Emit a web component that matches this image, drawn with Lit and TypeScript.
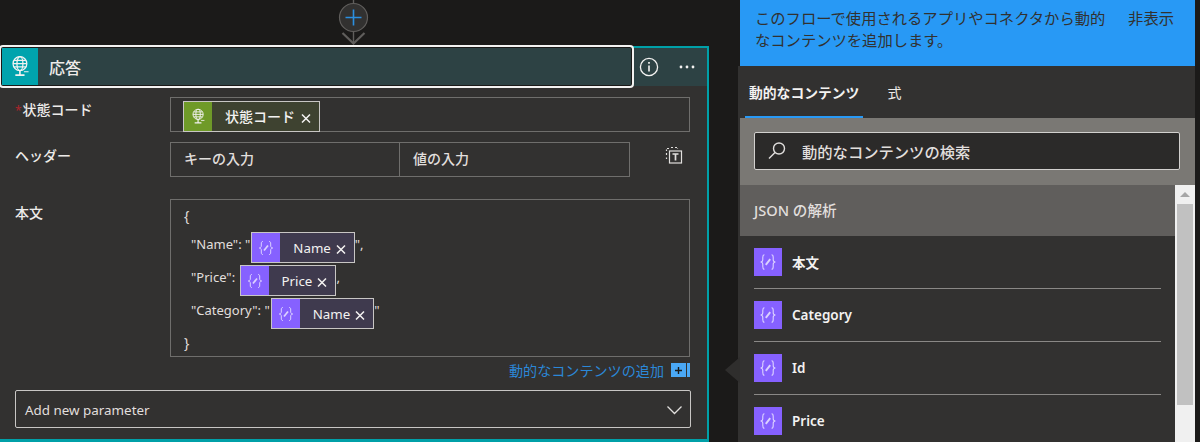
import { LitElement, html, css } from "lit";
import { customElement } from "lit/decorators.js";

const globe = (size: number) => html`<svg width=${size} height=${size} viewBox="0 0 20 20" fill="none" stroke="#f3f2f1" stroke-width="1.1">
  <circle cx="9.5" cy="7.5" r="6"/>
  <ellipse cx="9.5" cy="7.5" rx="2.6" ry="6"/>
  <path d="M3.5 7.5h12M4.4 4.6h10.2M4.4 10.4h10.2"/>
  <path d="M9.5 13.5v3.5M5.5 17.5h8" stroke-width="1.4"/>
  <path d="M13 14.6h4" stroke-width="1"/>
</svg>`;

const braces = (size: number) => html`<svg width=${size} height=${size} viewBox="0 0 18 18" fill="none" stroke="#dcd2ff" stroke-width="1">
  <path d="M5.8 2.5C4.4 2.5 4.3 3.4 4.3 5V7C4.3 8 3.6 9 2.3 9C3.6 9 4.3 10 4.3 11V13C4.3 14.6 4.4 15.5 5.8 15.5"/>
  <path d="M12.2 2.5C13.6 2.5 13.7 3.4 13.7 5V7C13.7 8 14.4 9 15.7 9C14.4 9 13.7 10 13.7 11V13C13.7 14.6 13.6 15.5 12.2 15.5"/>
  <path d="M7 11.6L11 6.4" stroke-width="1.7"/>
</svg>`;

const cross = html`<svg class="x" width="10" height="10" viewBox="0 0 10 10" stroke="#f3f2f1" stroke-width="1.5"><path d="M1 1.5l8 8M9 1.5l-8 8"/></svg>`;

@customElement("app-root")
export class AppRoot extends LitElement {
  static styles = css`
    :host { display: block; width: 1200px; height: 442px; overflow: hidden; background: #1b1a19; color: #f3f2f1;
      font-family: "Noto Sans", "Noto Sans CJK JP", sans-serif; font-size: 14px; }
    * { box-sizing: border-box; }
    .page { display: flex; height: 442px; }
    .left { width: 709px; flex: none; display: flex; flex-direction: column; }
    .connector { height: 46px; flex: none; display: flex; padding-left: 337px; }
    .card { flex: 1; background: #323130; border: solid #00a0a8; border-width: 2px 2px 3px 0; }
    .head { height: 38px; background: #2d4244; display: flex; align-items: flex-start; }
    .title { width: 635px; height: 43px; margin: -3px 0 -2px -1px; border: 2px solid #f3f2f1; border-radius: 4px;
      background: #2d4244; box-shadow: inset 0 0 0 1px #1b1a19; display: flex; align-items: center; padding: 1px; overflow: hidden; }
    .title-icon { width: 36px; height: 37px; background: #00a3ad; display: flex; align-items: center; justify-content: center; flex: none; }
    .title-text { margin-left: 11px; font-size: 16px; font-weight: 500; color: #edebe9; }
    .head-actions { display: flex; align-items: center; height: 38px; }
    .info { margin-left: 5px; }
    .dots { margin-left: 20px; }
    .form { padding: 11px 0 0 15px; display: flex; flex-direction: column; }
    .row { display: flex; align-items: flex-start; }
    .label { width: 155px; flex: none; line-height: 24px; padding-top: 2px; color: #edebe9; font-weight: 500; }
    .label.first { padding-top: 1px; }
    .req { color: #a4262c; font-size: 12px; margin-right: 1px; }
    .box { border: 1px solid #6f6e6c; height: 35px; }
    .status { width: 520px; padding: 3px 0 0 12px; }
    .hrow { margin-top: 10px; }
    .pair { width: 230px; display: flex; align-items: center; padding: 0 0 4px 13px; font-size: 14px; font-weight: 500; color: #e1dfdd; }
    .pair + .pair { margin-left: -1px; width: 231px; }
    .ticon { margin: 3px 0 0 34px; }
    .brow { margin-top: 22px; }
    .code { width: 520px; height: 158px; border: 1px solid #6f6e6c; padding: 4px 0 0 13px; font-size: 13px; color: #e1dfdd; }
    .ln { display: flex; align-items: flex-start; white-space: pre; line-height: 24px; height: 33px; padding-left: 7px; }
    .ln.brace { padding-left: 0; height: 28px; font-size: 14px; }
    .chip { display: inline-flex; align-items: center; height: 31px; border: 1px solid #c8c6c4; background: #3f3a4e; padding-right: 8px; flex: none;
      font-size: 13.3px; color: #f3f2f1; line-height: 20px; margin-left: 1px; }
    .chip .ic { width: 28px; height: 29px; background: #8661ff; display: flex; align-items: center; justify-content: center; flex: none; }
    .chip .tx { margin-left: 13px; }
    .chip .x { margin-left: 5px; margin-top: 3px; flex: none; }
    .chip.green { background: #3e4230; font-weight: 500; font-size: 14px; margin-left: 0; }
    .chip.green .x { margin-left: 6px; }
    .chip.green .ic { background: #6f9a28; }
    .link { width: 675px; height: 33px; display: flex; align-items: center; justify-content: flex-end; color: #2b88d8; padding-bottom: 7px; font-size: 14.1px; }
    .add { display: flex; margin-left: 7px; gap: 1px; height: 14px; }
    .add b { width: 15px; background: #4aa8f5; display: flex; align-items: center; justify-content: center; }
    .add i { width: 3px; background: #4aa8f5; }
    .select { width: 676px; height: 38px; border: 1px solid #c8c6c4; border-radius: 2px; display: flex; align-items: center; justify-content: space-between;
      padding: 2px 8px 0 9px; color: #e1dfdd; font-size: 13.4px; }
    .panel { position: relative; width: 455px; margin-left: 31px; flex: none; display: flex; flex-direction: column; height: 442px; }
    .caret { position: absolute; left: -15px; top: 357px; width: 0; height: 0; border-style: solid; border-width: 13px 15px 13px 0; border-color: transparent #2f2e2d transparent transparent; }
    .blue { height: 66px; flex: none; background: #2899f5; color: #323130; padding: 7px 21px 0 15px; display: flex; justify-content: space-between; font-size: 15.3px; line-height: 22px; }
    .lower { flex: 1; display: flex; flex-direction: column; margin-left: -2px; border-left: 2px solid #323130; min-height: 0; }
    .tabs { height: 52px; flex: none; background: #323130; display: flex; align-items: center; position: relative; font-size: 13.8px; }
    .tab { margin-left: 9px; font-weight: 600; color: #f3f2f1; }
    .tab2 { margin-left: 28px; color: #edebe9; font-size: 14px; }
    .bar { position: absolute; left: 5px; bottom: 0; width: 118px; height: 2px; background: #2899f5; }
    .searchwrap { height: 67px; flex: none; background: #7a7874; padding: 14px 15px 0 14px; }
    .search { height: 38px; background: #2b2a29; border: 1px solid #d2d0ce; border-radius: 2px; display: flex; align-items: center; padding-left: 12px; font-size: 15.3px; font-weight: 500; color: #e1dfdd; }
    .search svg { margin-right: 15px; flex: none; }
    .listwrap { flex: 1; display: flex; min-height: 0; background: #323130; }
    .list { flex: 1; min-width: 0; overflow: hidden; }
    .group { height: 51px; background: #605e5c; display: flex; align-items: center; padding: 0 0 2px 14px; color: #e1dfdd; font-weight: 500; font-size: 14.6px; }
    .item { margin-left: 14px; width: 407px; padding: 12px 0; height: 53px; border-bottom: 1px solid #8a8886; display: flex; align-items: center; font-weight: 600; font-size: 13.5px; color: #f3f2f1; }
    .item:last-child { border: 0; padding-top: 11px; }
    .item .sq { width: 28px; height: 28px; background: #8661ff; display: flex; align-items: center; justify-content: center; margin-right: 10px; flex: none; }
    .scroll { width: 20px; flex: none; background: #f0f0f0; padding: 0 2px; display: flex; flex-direction: column; }
    .arrow { height: 19px; display: flex; align-items: center; justify-content: center; flex: none; }
    .arrow span { width: 0; height: 0; border-style: solid; border-width: 0 5px 5px 5px; border-color: transparent transparent #a6a6a6 transparent; }
    .thumb { height: 201px; background: #c1c1c1; flex: none; }
  `;

  private chip(label: string) {
    return html`<span class="chip"><span class="ic">${braces(18)}</span><span class="tx">${label}</span>${cross}</span>`;
  }

  private item(label: string) {
    return html`<div class="item"><span class="sq">${braces(20)}</span>${label}</div>`;
  }

  render() {
    return html`<div class="page">
      <div class="left">
        <div class="connector">
          <svg width="34" height="46" viewBox="0 0 34 46" fill="none">
            <path d="M16.5 0v4M16.5 31v12" stroke="#605e5c" stroke-width="1.4"/>
            <circle cx="16.5" cy="17.5" r="14" fill="#323130" stroke="#605e5c" stroke-width="1.2"/>
            <path d="M16.5 9.5v16M8.5 17.5h16" stroke="#2b8fe0" stroke-width="1.6"/>
            <path d="M5.5 33l11 10.5l11-10.5" stroke="#605e5c" stroke-width="2.2"/>
          </svg>
        </div>
        <div class="card">
          <div class="head">
            <div class="title"><span class="title-icon">${globe(23)}</span><span class="title-text">応答</span></div>
            <div class="head-actions">
              <svg class="info" width="20" height="20" viewBox="0 0 20 20" fill="none" stroke="#f3f2f1" stroke-width="1.3">
                <circle cx="10" cy="10" r="8.6"/><path d="M10 8.6v6" stroke-width="1.6"/><path d="M10 5v1.7" stroke-width="1.7"/>
              </svg>
              <svg class="dots" width="16" height="4" viewBox="0 0 16 4" fill="#f3f2f1"><circle cx="2" cy="2" r="1.4"/><circle cx="8" cy="2" r="1.4"/><circle cx="14" cy="2" r="1.4"/></svg>
            </div>
          </div>
          <div class="form">
            <div class="row">
              <div class="label first"><span class="req">*</span>状態コード</div>
              <div class="box status"><span class="chip green"><span class="ic">${globe(17)}</span><span class="tx">状態コード</span>${cross}</span></div>
            </div>
            <div class="row hrow">
              <div class="label">ヘッダー</div>
              <div class="box pair">キーの入力</div>
              <div class="box pair">値の入力</div>
              <svg class="ticon" width="20" height="20" viewBox="0 0 20 20" fill="none" stroke="#e1dfdd" stroke-width="1.2">
                <path d="M5 3.5H2.5V6M2.5 8v2.5M2.5 12.5V14M7 2.5h2M11 2.5h2.5V4" stroke-dasharray="2 1.4"/>
                <rect x="5.5" y="6" width="12" height="12"/>
                <path d="M8.5 9h6M11.5 9v6.5" stroke-width="1.7"/>
              </svg>
            </div>
            <div class="row brow">
              <div class="label">本文</div>
              <div class="code">
                <div class="ln brace">{</div>
                <div class="ln">"Name": "${this.chip("Name")}",</div>
                <div class="ln">"Price": ${this.chip("Price")},</div>
                <div class="ln">"Category": "${this.chip("Name")}"</div>
                <div class="ln brace">}</div>
              </div>
            </div>
            <div class="link">動的なコンテンツの追加<span class="add"><b><svg width="9" height="9" viewBox="0 0 9 9" stroke="#1b1a19" stroke-width="1.4"><path d="M4.5 1v7M1 4.5h7"/></svg></b><i></i></span></div>
            <div class="select">Add new parameter
              <svg width="15" height="10" viewBox="0 0 15 10" fill="none" stroke="#e1dfdd" stroke-width="1.3"><path d="M0.5 1.5l7 7l7-7"/></svg>
            </div>
          </div>
        </div>
      </div>
      <div class="panel">
        <div class="caret"></div>
        <div class="blue"><div>このフローで使用されるアプリやコネクタから動的<br>なコンテンツを追加します。</div><div>非表示</div></div>
        <div class="lower">
          <div class="tabs"><span class="tab">動的なコンテンツ</span><span class="tab2">式</span><span class="bar"></span></div>
          <div class="searchwrap">
            <div class="search">
              <svg width="20" height="20" viewBox="0 0 20 20" fill="none" stroke="#e1dfdd" stroke-width="1.4"><circle cx="12" cy="7.5" r="5.5"/><path d="M8 11.5L2 17.5"/></svg>
              動的なコンテンツの検索
            </div>
          </div>
          <div class="listwrap">
            <div class="list">
              <div class="group">JSON の解析</div>
              ${this.item("本文")}${this.item("Category")}${this.item("Id")}${this.item("Price")}
            </div>
            <div class="scroll"><div class="arrow"><span></span></div><div class="thumb"></div></div>
          </div>
        </div>
      </div>
    </div>`;
  }
}
